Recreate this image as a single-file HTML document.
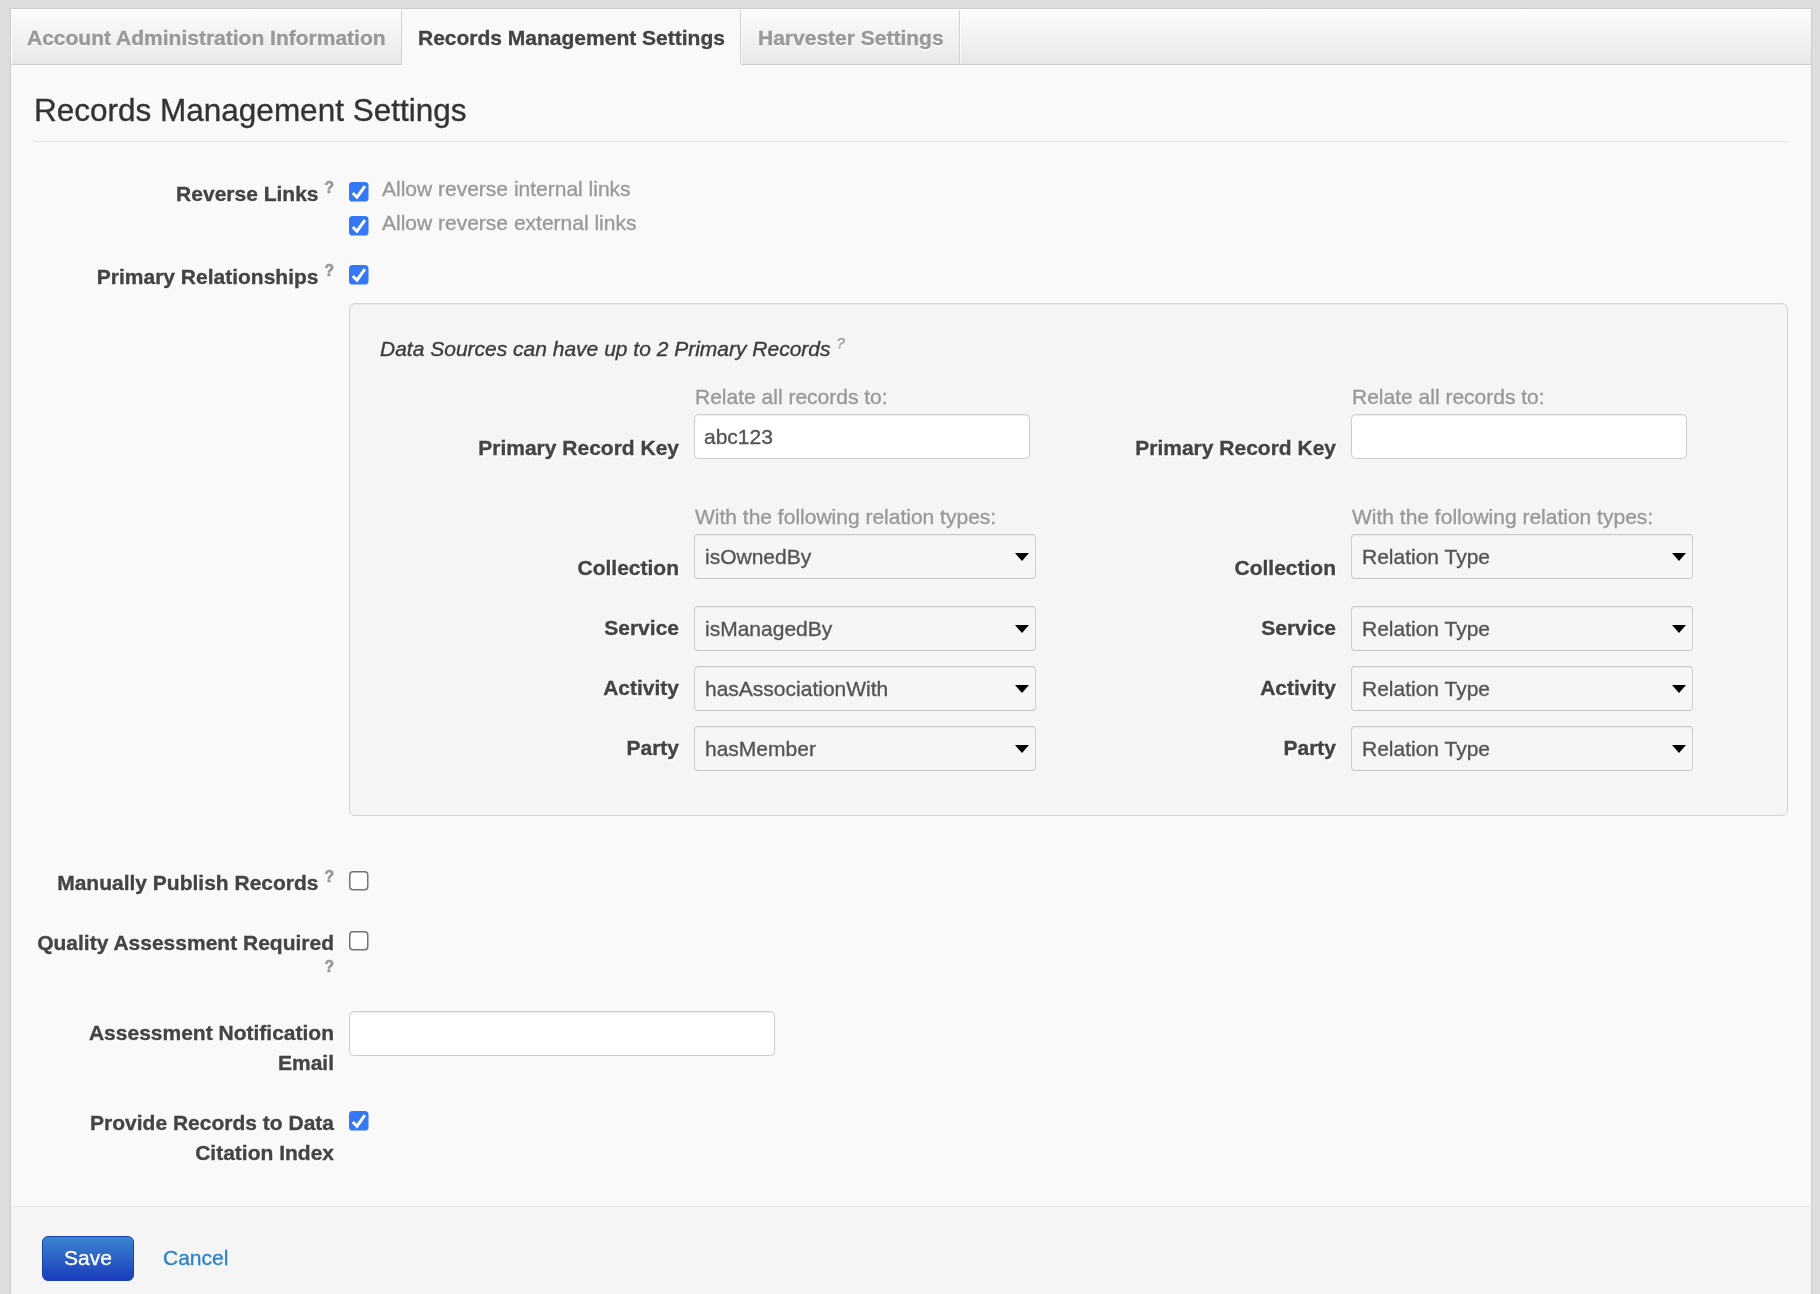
<!DOCTYPE html>
<html>
<head>
<meta charset="utf-8">
<title>Records Management Settings</title>
<style>
html,body{margin:0;padding:0;}
body{width:1820px;height:1294px;overflow:hidden;background:#dddddd;font-family:"Liberation Sans",sans-serif;font-size:21px;line-height:30px;color:#333;position:relative;}
*{box-sizing:border-box;}
.abs{position:absolute;}
.box{position:absolute;left:10px;top:8px;width:1802px;height:1300px;background:#f9f9f9;border:1px solid #cdcdcd;}
.thead{position:absolute;left:11px;top:9px;width:1800px;height:56px;border-top:1px solid #fff;border-left:1px solid #fff;border-bottom:1px solid #cdcdcd;background:linear-gradient(#fcfcfc,#e8e8e8);}
.tab{position:absolute;top:10px;height:54px;border-right:1px solid #d2d2d2;font-weight:bold;font-size:21px;line-height:56px;color:#999;text-shadow:0 1.5px 0 #fff;padding-left:16px;white-space:nowrap;}
.tab.active{background:#f9f9f9;color:#444;height:55px;top:10px;line-height:56px;box-shadow:0 -1px 0 #f9f9f9, 1px 0 0 rgba(255,255,255,0.7);}
.legend{position:absolute;left:34px;top:80px;width:1753px;height:62px;border-bottom:1px solid #e5e5e5;font-size:31.5px;line-height:60px;color:#333;white-space:nowrap;}
.lbl{position:absolute;text-align:right;font-weight:bold;font-size:21px;line-height:30px;color:#444;text-shadow:1.5px 1.5px 0 #fff;white-space:nowrap;}
.lbl sup,.q{font-size:15.75px;color:#999;font-weight:bold;-webkit-text-stroke-width:0.6px;position:relative;top:-8px;vertical-align:baseline;line-height:0;}
.cb{position:absolute;width:19.5px;height:19.5px;border-radius:3.5px;}
.cb.on{background:#3478f6;}
.cb.off{background:#fff;border:1.5px solid #767676;}
.cbs{position:absolute;}
.muted{position:absolute;color:#999;font-size:21px;line-height:30px;white-space:nowrap;}
.well{position:absolute;left:349px;top:303px;width:1439px;height:513px;background:#f5f5f5;border:1px solid #d4d4d4;border-radius:6px;box-shadow:inset 0 1px 1px rgba(0,0,0,0.04);}
.inp{position:absolute;height:45px;background:#fff;border:1px solid #ccc;border-radius:4.5px;box-shadow:inset 0 1px 1px rgba(0,0,0,0.075);font-size:21px;line-height:43px;color:#555;padding-left:9px;white-space:nowrap;}
.sel{position:absolute;height:45px;width:342px;background:#f6f6f6;border:1px solid #cecece;border-top-color:#c8c8c8;border-bottom-color:#c4c4c4;border-radius:4px;box-shadow:inset 0 1px 1px rgba(0,0,0,0.05);font-size:21px;line-height:43px;color:#555;padding-left:10px;white-space:nowrap;}
.sel:after{content:"";position:absolute;right:6px;top:18px;border-left:7.5px solid transparent;border-right:7.5px solid transparent;border-top:8px solid #000;}
.actions{position:absolute;left:11px;top:1206px;width:1800px;height:100px;background:#f5f5f5;border-top:1px solid #e5e5e5;}
.btn{position:absolute;left:42px;top:1236px;width:92px;height:45px;border-radius:6px;background:linear-gradient(#3a86d0,#1b3cbc);border:1px solid #1c42ad;color:#fff;font-size:21px;line-height:41px;text-align:center;text-shadow:0 -1px 0 rgba(0,0,0,0.25);}
.link{position:absolute;color:#2d83c6;font-size:21px;line-height:30px;}
</style>
</head>
<body>
<div id="wrap" style="position:absolute;left:0;top:0;width:1820px;height:1294px;will-change:transform;-webkit-text-stroke-width:0.35px;">
<div class="box"></div>
<div class="thead"></div>
<div class="tab" style="left:11px;width:391px;">Account Administration Information</div>
<div class="tab active" style="left:402px;width:339px;">Records Management Settings</div>
<div class="tab" style="left:741px;width:219px;padding-left:17px;box-shadow:1px 0 0 rgba(255,255,255,0.7);">Harvester Settings</div>

<div class="legend">Records Management Settings</div>

<!-- Reverse links -->
<div class="lbl" style="right:1486px;top:179px;">Reverse Links <sup>?</sup></div>
<svg class="cbs" style="left:349px;top:182px;" width="21" height="21" viewBox="0 0 21 21"><rect x="0" y="0" width="19.5" height="19.5" rx="3.6" fill="#3478f6"/><path d="M3.8 11 L8 15.2 L15.9 4.2" fill="none" stroke="#fff" stroke-width="3"/></svg>
<div class="muted" style="left:382px;top:174px;">Allow reverse internal links</div>
<svg class="cbs" style="left:349px;top:216px;" width="21" height="21" viewBox="0 0 21 21"><rect x="0" y="0" width="19.5" height="19.5" rx="3.6" fill="#3478f6"/><path d="M3.8 11 L8 15.2 L15.9 4.2" fill="none" stroke="#fff" stroke-width="3"/></svg>
<div class="muted" style="left:382px;top:208px;">Allow reverse external links</div>

<!-- Primary relationships -->
<div class="lbl" style="right:1486px;top:262px;">Primary Relationships <sup>?</sup></div>
<svg class="cbs" style="left:349px;top:265px;" width="21" height="21" viewBox="0 0 21 21"><rect x="0" y="0" width="19.5" height="19.5" rx="3.6" fill="#3478f6"/><path d="M3.8 11 L8 15.2 L15.9 4.2" fill="none" stroke="#fff" stroke-width="3"/></svg>

<div class="well"></div>
<div class="abs" style="left:380px;top:334px;font-style:italic;font-size:21px;line-height:30px;color:#3c3c3c;white-space:nowrap;">Data Sources can have up to 2 Primary Records <span class="q" style="font-weight:normal;font-size:15px;top:-8px;-webkit-text-stroke-width:0.3px;">?</span></div>

<!-- left column -->
<div class="muted" style="left:695px;top:382px;">Relate all records to:</div>
<div class="lbl" style="right:1141px;top:433px;">Primary Record Key</div>
<div class="inp" style="left:694px;top:414px;width:336px;">abc123</div>
<div class="muted" style="left:695px;top:502px;">With the following relation types:</div>
<div class="lbl" style="right:1141px;top:553px;">Collection</div>
<div class="sel" style="left:694px;top:534px;">isOwnedBy</div>
<div class="lbl" style="right:1141px;top:613px;">Service</div>
<div class="sel" style="left:694px;top:606px;">isManagedBy</div>
<div class="lbl" style="right:1141px;top:673px;">Activity</div>
<div class="sel" style="left:694px;top:666px;">hasAssociationWith</div>
<div class="lbl" style="right:1141px;top:733px;">Party</div>
<div class="sel" style="left:694px;top:726px;">hasMember</div>

<!-- right column -->
<div class="muted" style="left:1352px;top:382px;">Relate all records to:</div>
<div class="lbl" style="right:484px;top:433px;">Primary Record Key</div>
<div class="inp" style="left:1351px;top:414px;width:336px;"></div>
<div class="muted" style="left:1352px;top:502px;">With the following relation types:</div>
<div class="lbl" style="right:484px;top:553px;">Collection</div>
<div class="sel" style="left:1351px;top:534px;">Relation Type</div>
<div class="lbl" style="right:484px;top:613px;">Service</div>
<div class="sel" style="left:1351px;top:606px;">Relation Type</div>
<div class="lbl" style="right:484px;top:673px;">Activity</div>
<div class="sel" style="left:1351px;top:666px;">Relation Type</div>
<div class="lbl" style="right:484px;top:733px;">Party</div>
<div class="sel" style="left:1351px;top:726px;">Relation Type</div>

<!-- lower rows -->
<div class="lbl" style="right:1486px;top:868px;">Manually Publish Records <sup>?</sup></div>
<svg class="cbs" style="left:349px;top:871px;" width="21" height="21" viewBox="0 0 21 21"><rect x="0.75" y="0.75" width="18" height="18" rx="3.2" fill="#fff" stroke="#747474" stroke-width="1.5"/></svg>
<div class="lbl" style="right:1486px;top:928px;white-space:normal;width:300px;">Quality Assessment Required <sup>?</sup></div>
<svg class="cbs" style="left:349px;top:931px;" width="21" height="21" viewBox="0 0 21 21"><rect x="0.75" y="0.75" width="18" height="18" rx="3.2" fill="#fff" stroke="#747474" stroke-width="1.5"/></svg>
<div class="lbl" style="right:1486px;top:1018px;">Assessment Notification<br>Email</div>
<div class="inp" style="left:349px;top:1011px;width:426px;"></div>
<div class="lbl" style="right:1486px;top:1108px;">Provide Records to Data<br>Citation Index</div>
<svg class="cbs" style="left:349px;top:1111px;" width="21" height="21" viewBox="0 0 21 21"><rect x="0" y="0" width="19.5" height="19.5" rx="3.6" fill="#3478f6"/><path d="M3.8 11 L8 15.2 L15.9 4.2" fill="none" stroke="#fff" stroke-width="3"/></svg>

<div class="actions"></div>
<div class="btn">Save</div>
<div class="link" style="left:163px;top:1243px;">Cancel</div>
</div>
</body>
</html>
